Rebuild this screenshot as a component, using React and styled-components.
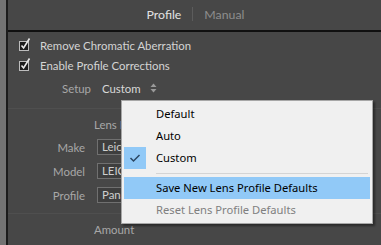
import React from 'react'
import styled, { createGlobalStyle } from 'styled-components'

const Global = createGlobalStyle`
  html, body { margin: 0; padding: 0; background: #474747; }
  * { box-sizing: border-box; }
`

const Check = () => (
  <svg width="12" height="14" viewBox="0 0 12 14">
    <rect x="0.5" y="4.5" width="9" height="9" fill="#1c1c1c" stroke="#bdbdbd" />
    <path d="M2.5 8.5 L4.6 11 L10.5 1.5" fill="none" stroke="#e8e8e8" strokeWidth="1.6" />
  </svg>
)

const UpDown = () => (
  <svg width="7" height="10" viewBox="0 0 7 10">
    <path d="M3.5 0.5 L6.5 4 L0.5 4 Z" fill="#9a9a9a" />
    <path d="M3.5 9.5 L6.5 6 L0.5 6 Z" fill="#9a9a9a" />
  </svg>
)

const MenuCheck = () => (
  <svg width="12" height="10" viewBox="0 0 12 10">
    <path d="M1.5 5 L4.5 8 L10.5 2" fill="none" stroke="#2b4763" strokeWidth="1.5" />
  </svg>
)

const App = () => {
  const items = [
    { label: 'Default' },
    { label: 'Auto' },
    { label: 'Custom', checked: true },
  ]
  return (
    <Screen>
      <Global />
      <Strip />
      <Panel>
        <Tabs>
          <Tab active>Profile</Tab>
          <TabSep />
          <Tab>Manual</Tab>
        </Tabs>
        <Body>
          <CheckRow><Check /><span>Remove Chromatic Aberration</span></CheckRow>
          <CheckRow><Check /><span>Enable Profile Corrections</span></CheckRow>
          <SetupRow>
            <Label w={83}>Setup</Label>
            <Value>Custom</Value>
            <UpDown />
          </SetupRow>
          <Divider />
          <Heading>Lens Profile</Heading>
          <FieldRow gap={5}><Label w={77}>Make</Label><Field>Leica</Field></FieldRow>
          <FieldRow gap={8}><Label w={77}>Model</Label><Field>LEICA</Field></FieldRow>
          <FieldRow gap={8}><Label w={77}>Profile</Label><Field>Panasonic</Field></FieldRow>
          <Divider />
          <Heading>Amount</Heading>
        </Body>
      </Panel>

      <Menu>
        {items.map(it => (
          <Item key={it.label}>
            <CheckCell on={it.checked}>{it.checked && <MenuCheck />}</CheckCell>
            <ItemText>{it.label}</ItemText>
          </Item>
        ))}
        <MenuSep />
        <Item hot><CheckCell /><ItemText>Save New Lens Profile Defaults</ItemText></Item>
        <Item disabled><CheckCell /><ItemText>Reset Lens Profile Defaults</ItemText></Item>
      </Menu>
    </Screen>
  )
}

export default App

const Screen = styled.div`
  position: relative;
  width: 381px;
  height: 245px;
  overflow: hidden;
  display: flex;
  font-family: Lato, "Noto Sans", sans-serif;
  font-size: 11.4px;
`
const Strip = styled.div`
  width: 8px;
  background: #737373;
  border-right: 2px solid #1b1b1b;
`
const Panel = styled.div`
  flex: 1;
  background: #474747;
  display: flex;
  flex-direction: column;
`
const Tabs = styled.div`
  height: 32px;
  display: flex;
  align-items: center;
  justify-content: center;
  gap: 11px;
  border-bottom: 2px solid #101010;
  padding-left: 2px;
  padding-bottom: 2px;
`
const Tab = styled.span`
  font-size: 12.3px;
  color: ${p => p.active ? '#e2e2e2' : '#8e8e8e'};
`
const TabSep = styled.span`
  width: 1px;
  height: 14px;
  background: #5c5c5c;
`
const Body = styled.div`
  display: flex;
  flex-direction: column;
  padding-top: 4px;
`
const CheckRow = styled.div`
  height: 19.5px;
  display: flex;
  align-items: center;
  padding-left: 11px;
  gap: 9px;
  color: #d4d4d4;
  svg { margin-top: -3px; }
`
const SetupRow = styled.div`
  height: 20px;
  margin-top: 3px;
  display: flex;
  align-items: center;
  svg { margin-left: 9px; }
`
const Label = styled.span`
  width: ${p => p.w}px;
  text-align: right;
  color: #a8a8a8;
`
const Value = styled.span`
  margin-left: 11px;
  color: #d8d8d8;
`
const Divider = styled.div`
  height: 1px;
  background: #393939;
  margin: 10px 0 0;
  border-bottom: 1px solid #4f4f4f;
`
const Heading = styled.div`
  height: 20px;
  margin-top: 5px;
  display: flex;
  align-items: center;
  padding-left: 86px;
  color: #a8a8a8;
`
const FieldRow = styled.div`
  height: 16px;
  margin-top: ${p => p.gap}px;
  display: flex;
  align-items: center;
`
const Field = styled.div`
  margin-left: 12px;
  width: 120px;
  height: 16px;
  border: 1px solid #707070;
  background: #3e3e3e;
  color: #cfcfcf;
  line-height: 14px;
  padding-left: 4px;
`
const Menu = styled.div`
  position: absolute;
  left: 121px;
  top: 100px;
  width: 252px;
  padding: 2px;
  background: #f0f0f0;
  border: 1px solid #a7a7a7;
  box-shadow: 2px 2px 2px rgba(0, 0, 0, 0.4);
  font-family: "Noto Sans", "Open Sans", sans-serif;
  font-size: 11.2px;
`
const Item = styled.div`
  height: 22px;
  display: flex;
  align-items: center;
  background: ${p => p.hot ? '#91c9f7' : 'transparent'};
  color: ${p => p.disabled ? '#7f7f7f' : '#000'};
`
const CheckCell = styled.div`
  width: 22px;
  height: 22px;
  display: flex;
  align-items: center;
  justify-content: center;
  background: ${p => p.on ? '#91c9f7' : 'transparent'};
`
const ItemText = styled.span`
  margin-left: 10px;
  margin-top: -2px;
`
const MenuSep = styled.div`
  height: 1px;
  background: #d4d4d4;
  margin: 4px 2px 3px 32px;
`
